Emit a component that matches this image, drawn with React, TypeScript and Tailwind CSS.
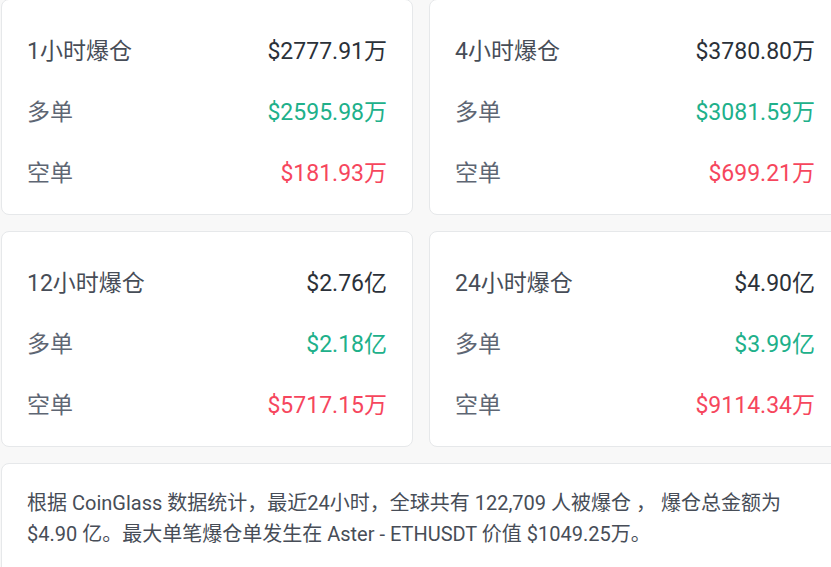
import React from "react";

type Stat = {
  period: string;
  total: string;
  long: string;
  short: string;
};

const stats: Stat[] = [
  { period: "1小时爆仓", total: "$2777.91万", long: "$2595.98万", short: "$181.93万" },
  { period: "4小时爆仓", total: "$3780.80万", long: "$3081.59万", short: "$699.21万" },
  { period: "12小时爆仓", total: "$2.76亿", long: "$2.18亿", short: "$5717.15万" },
  { period: "24小时爆仓", total: "$4.90亿", long: "$3.99亿", short: "$9114.34万" },
];

const font = {
  fontFamily: '"Roboto", "Noto Sans CJK SC", sans-serif',
};

const StatCard = ({ stat }: { stat: Stat }) => {
  return (
    <div className="bg-white border border-[#e6e8ea] rounded-lg px-[25px] pt-[37px] pb-[25px] flex flex-col gap-[31px]">
      {/* Header row */}
      <div className="flex items-center justify-between h-[30px] text-[23px] leading-[30px]">
        <span className="text-[#474d57]">{stat.period}</span>
        <span className="text-[#2b3139]">{stat.total}</span>
      </div>
      <div className="flex items-center justify-between h-[30px] text-[23px] leading-[30px]">
        <span className="text-[#5e6673]">多单</span>
        <span className="text-[#20b08a]">{stat.long}</span>
      </div>
      <div className="flex items-center justify-between h-[30px] text-[23px] leading-[30px]">
        <span className="text-[#5e6673]">空单</span>
        <span className="text-[#f6465d]">{stat.short}</span>
      </div>
    </div>
  );
};

export default function App() {
  return (
    <div className="w-full h-screen overflow-hidden bg-[#f8f8f8]" style={font}>
      <div className="w-[841px] ml-px -mt-px flex flex-col gap-4">
        <div className="grid grid-cols-[412px_412px] gap-x-4 gap-y-4">
          {stats.map((s) => (
            <StatCard key={s.period} stat={s} />
          ))}
        </div>

        {/* Summary */}
        <div className="bg-white border border-[#e6e8ea] rounded-lg px-[25px] pt-6 pb-6">
          <p className="text-[20px] leading-[31px] text-[#474d57]">
            根据 CoinGlass 数据统计，最近24小时，全球共有 122,709 人被爆仓 ， 爆仓总金额为
            <br />
            $4.90 亿。最大单笔爆仓单发生在 Aster - ETHUSDT 价值 $1049.25万。
          </p>
        </div>
      </div>
    </div>
  );
}
